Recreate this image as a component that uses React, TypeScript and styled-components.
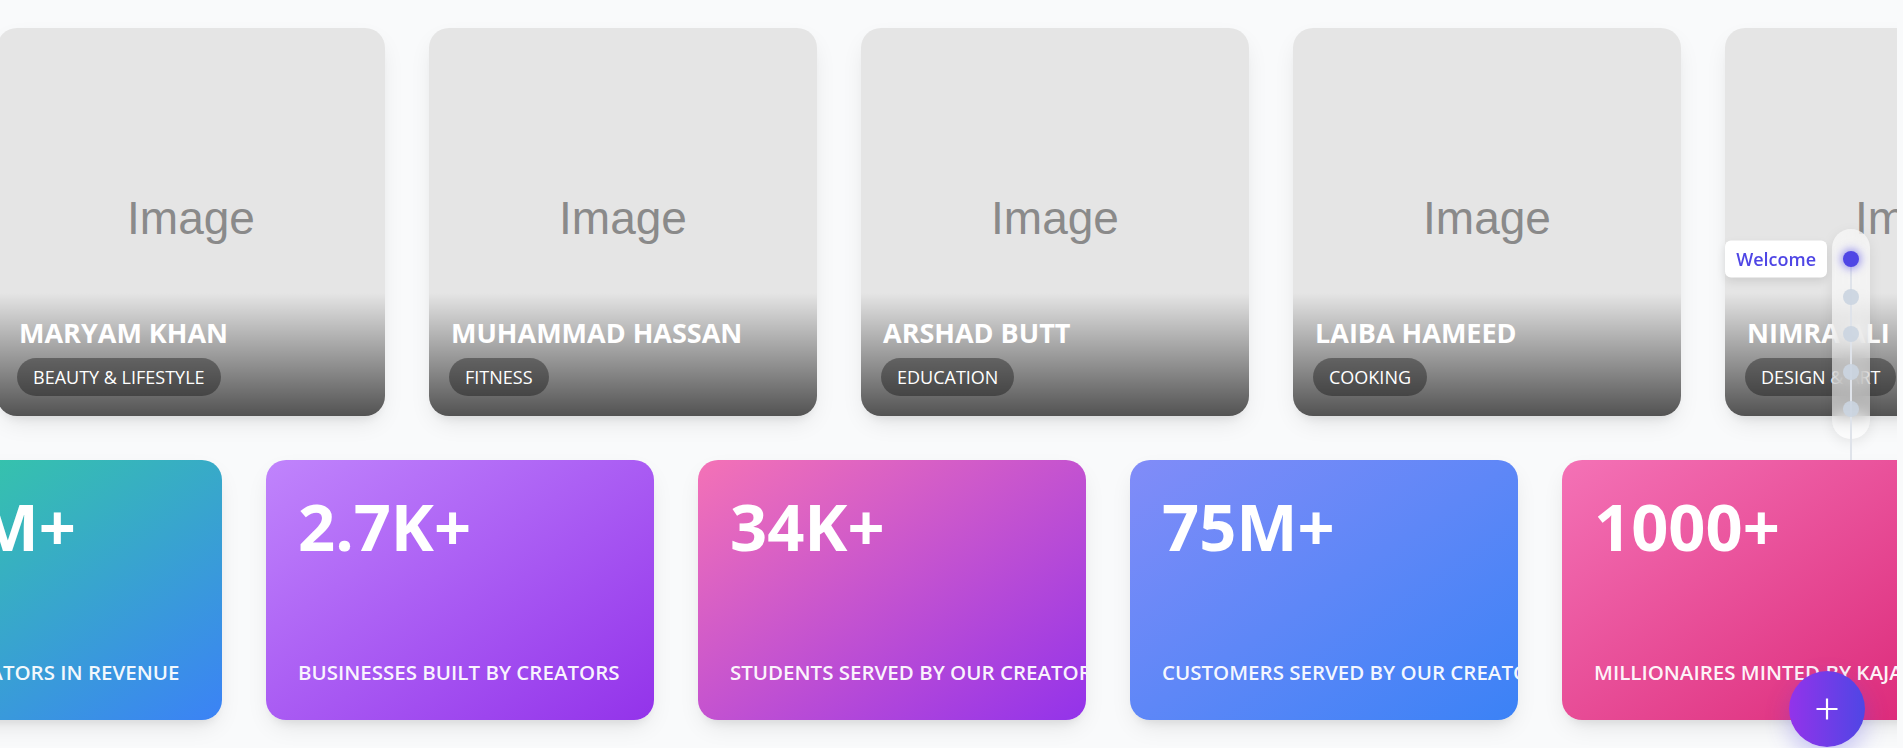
import React from "react";
import styled, { createGlobalStyle } from "styled-components";

const GlobalStyle = createGlobalStyle`
  * { box-sizing: border-box; }
  html {
    background: #f9fafb;
  }
  body {
    margin: 0;
    background: #f9fafb;
    overflow-x: hidden;
    font-family: "Open Sans", "Noto Sans", sans-serif;
  }
  button { font-family: inherit; }
`;

const Page = styled.main`
  width: calc(100% - 6px);
  padding-top: 28px;
  min-height: 100vh;
  display: flex;
  flex-direction: column;
  gap: 44px;
  overflow: hidden;
`;

const Track = styled.div<{ $shift: number }>`
  display: flex;
  gap: 44px;
  width: max-content;
  transform: translateX(${(p) => p.$shift}px);
`;

const CreatorCard = styled.article`
  width: 388px;
  height: 388px;
  flex-shrink: 0;
  border-radius: 20px;
  overflow: hidden;
  background: #e5e5e5;
  display: grid;
  box-shadow: 0 10px 25px -5px rgba(0, 0, 0, 0.1), 0 8px 10px -6px rgba(0, 0, 0, 0.08);
`;

const Placeholder = styled.div`
  grid-area: 1 / 1;
  display: flex;
  align-items: center;
  justify-content: center;
  padding-bottom: 8px;
  font-family: "Liberation Sans", Arial, sans-serif;
  font-size: 46px;
  color: #8a8a8a;
`;

const Info = styled.div`
  grid-area: 1 / 1;
  align-self: end;
  padding: 23px 20px 20px 20px;
  background: linear-gradient(to top, rgba(0, 0, 0, 0.64), rgba(0, 0, 0, 0));
  display: flex;
  flex-direction: column;
  align-items: flex-start;
  gap: 8px;
`;

const Name = styled.h3`
  margin: 0 0 0 2px;
  font-size: 27px;
  line-height: 34px;
  font-weight: 700;
  color: #ffffff;
  white-space: nowrap;
`;

const Category = styled.span`
  display: inline-block;
  padding: 6px 16px;
  border-radius: 999px;
  background: rgba(0, 0, 0, 0.35);
  color: #ffffff;
  font-size: 18px;
  line-height: 26px;
  white-space: nowrap;
`;

const StatCard = styled.div<{ $from: string; $to: string }>`
  width: 388px;
  height: 260px;
  flex-shrink: 0;
  border-radius: 20px;
  overflow: hidden;
  padding: 34px 32px;
  display: flex;
  flex-direction: column;
  justify-content: space-between;
  color: #ffffff;
  background: linear-gradient(to bottom right, ${(p) => p.$from}, ${(p) => p.$to});
  box-shadow: 0 10px 25px -5px rgba(0, 0, 0, 0.1), 0 8px 10px -6px rgba(0, 0, 0, 0.08);
`;

const StatValue = styled.div`
  font-size: 65px;
  line-height: 1;
  font-weight: 700;
  white-space: nowrap;
`;

const StatLabel = styled.div`
  font-size: 20.5px;
  line-height: 28px;
  font-weight: 600;
  color: rgba(255, 255, 255, 0.94);
  white-space: nowrap;
`;

const SideNav = styled.nav`
  position: fixed;
  top: 229px;
  right: 33px;
  width: 38px;
  padding: 22px 0;
  border-radius: 19px;
  background: rgba(255, 255, 255, 0.55);
  backdrop-filter: blur(8px);
  box-shadow: 0 4px 14px rgba(0, 0, 0, 0.08);
  display: flex;
  flex-direction: column;
  align-items: center;
  gap: 21.5px;
  z-index: 50;
`;

const NavLine = styled.span`
  position: absolute;
  left: 18px;
  top: 30px;
  width: 2px;
  height: 201px;
  background: #dfe3ea;
`;

const Dot = styled.button<{ $active?: boolean }>`
  position: relative;
  width: 16px;
  height: 16px;
  padding: 0;
  border: 0;
  border-radius: 50%;
  cursor: pointer;
  background: ${(p) => (p.$active ? "#4f46e5" : "rgba(203, 213, 225, 0.92)")};
  box-shadow: ${(p) => (p.$active ? "0 0 8px 2px rgba(79, 70, 229, 0.55)" : "none")};
`;

const Tooltip = styled.span`
  position: absolute;
  right: calc(100% + 16px);
  top: 50%;
  transform: translateY(-50%);
  padding: 6px 11px;
  border-radius: 6px;
  background: #ffffff;
  color: #4f46e5;
  font-size: 18px;
  line-height: 25px;
  font-weight: 600;
  white-space: nowrap;
  box-shadow: 0 4px 10px rgba(0, 0, 0, 0.1);
`;

const Fab = styled.button`
  position: fixed;
  right: 38px;
  bottom: 1px;
  width: 76px;
  height: 76px;
  padding: 0;
  border: 0;
  border-radius: 50%;
  cursor: pointer;
  background: linear-gradient(to right, #9333ea, #4f46e5);
  box-shadow: 0 10px 24px rgba(79, 70, 229, 0.3);
  display: flex;
  align-items: center;
  justify-content: center;
  z-index: 60;
`;

const creators = [
  { name: "MARYAM KHAN", category: "BEAUTY & LIFESTYLE" },
  { name: "MUHAMMAD HASSAN", category: "FITNESS" },
  { name: "ARSHAD BUTT", category: "EDUCATION" },
  { name: "LAIBA HAMEED", category: "COOKING" },
  { name: "NIMRA ALI", category: "DESIGN & ART" },
];

const stats = [
  { value: "$10M+", label: "PAID TO CREATORS IN REVENUE", from: "#34d399", to: "#3b82f6" },
  { value: "2.7K+", label: "BUSINESSES BUILT BY CREATORS", from: "#c084fc", to: "#9333ea" },
  { value: "34K+", label: "STUDENTS SERVED BY OUR CREATORS", from: "#f472b6", to: "#9333ea" },
  { value: "75M+", label: "CUSTOMERS SERVED BY OUR CREATORS", from: "#818cf8", to: "#3b82f6" },
  { value: "1000+", label: "MILLIONAIRES MINTED BY KAJABI", from: "#f472b6", to: "#db2777" },
];

const sections = ["Welcome", "Creators", "Stats", "Features", "Contact"];

export default function App() {
  return (
    <>
      <GlobalStyle />
      <Page>
        <Track $shift={-3}>
          {creators.map((c) => (
            <CreatorCard key={c.name}>
              <Placeholder>Image</Placeholder>
              <Info>
                <Name>{c.name}</Name>
                <Category>{c.category}</Category>
              </Info>
            </CreatorCard>
          ))}
        </Track>
        <Track $shift={-166}>
          {stats.map((s) => (
            <StatCard key={s.value} $from={s.from} $to={s.to}>
              <StatValue>{s.value}</StatValue>
              <StatLabel>{s.label}</StatLabel>
            </StatCard>
          ))}
        </Track>
      </Page>
      <SideNav aria-label="Sections">
        <NavLine />
        {sections.map((s, i) => (
          <Dot key={s} $active={i === 0} aria-label={s}>
            {i === 0 && <Tooltip>{s}</Tooltip>}
          </Dot>
        ))}
      </SideNav>
      <Fab aria-label="Add">
        <svg width="24" height="24" viewBox="0 0 24 24" fill="none">
          <path d="M12 1.5v21M1.5 12h21" stroke="#ffffff" strokeWidth="2.2" />
        </svg>
      </Fab>
    </>
  );
}
